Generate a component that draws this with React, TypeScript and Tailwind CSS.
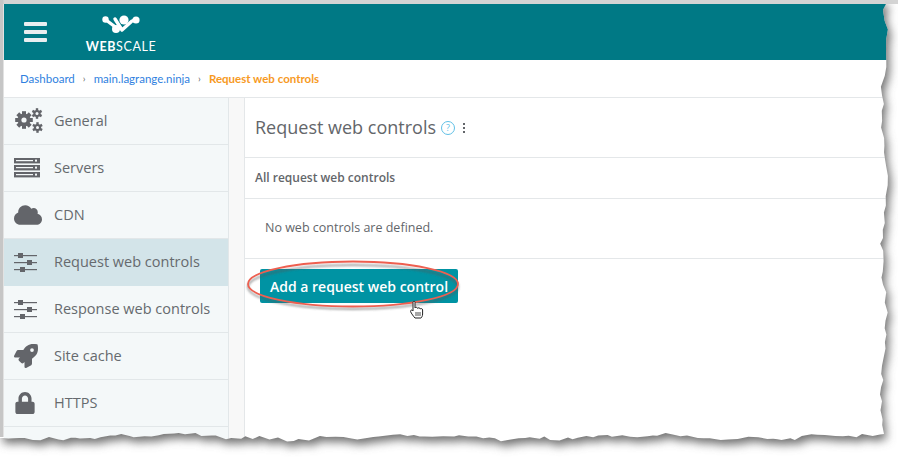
import React from "react";
import { FaCloud, FaRocket, FaLock } from "react-icons/fa";

function seeded(seed: number) {
  let s = seed;
  return () => {
    s = (s * 16807) % 2147483647;
    return (s - 1) / 2147483646;
  };
}

function tornPath() {
  const r = seeded(4242);
  const pts: string[] = ["0,0", "884,0", "886,4", "885,6"];
  // right edge: top to bottom
  for (let y = 10; y < 428; y += 5 + r() * 6) {
    const x = 882 + r() * 4 + Math.sin(y / 23) * 2;
    pts.push(`${x.toFixed(1)},${y.toFixed(1)}`);
  }
  pts.push("884,434");
  // bottom edge: right to left
  for (let x = 880; x > 4; x -= 4 + r() * 7) {
    const y = 439 - r() * 4 + Math.sin(x / 37) * 2 + Math.sin(x / 11);
    pts.push(`${x.toFixed(1)},${y.toFixed(1)}`);
  }
  pts.push("3,438", "0,438");
  return "M" + pts.join(" L") + " Z";
}

const torn = tornPath();

function Gears() {
  return (
    <svg width="29" height="26" viewBox="0 0 29 26" fill="#63656a">
      <g>
        <circle cx="10" cy="12" r="6.5" />
        {[0, 45, 90, 135].map((a) => (
          <rect key={a} x="8" y="3.2" width="4" height="17.6" transform={`rotate(${a} 10 12)`} />
        ))}
        <circle cx="10" cy="12" r="2.6" fill="#f4f8f9" />
      </g>
      {[
        [23, 5.5],
        [23.5, 19.5],
      ].map(([cx, cy]) => (
        <g key={cy}>
          <circle cx={cx} cy={cy} r="3.6" />
          {[0, 60, 120].map((a) => (
            <rect key={a} x={cx - 1.2} y={cy - 5.3} width="2.4" height="10.6" transform={`rotate(${a} ${cx} ${cy})`} />
          ))}
          <circle cx={cx} cy={cy} r="1.5" fill="#f4f8f9" />
        </g>
      ))}
    </svg>
  );
}

function ServersIcon() {
  return (
    <svg width="26" height="20" viewBox="0 0 26 20" fill="#63656a">
      {[0, 7, 14].map((y) => (
        <g key={y}>
          <rect x="0" y={y} width="26" height="5.4" />
          <rect x="2" y={y + 2} width="17" height="1.2" fill="#f4f8f9" />
          <rect x="21" y={y + 1.6} width="2" height="2" fill="#f4f8f9" />
        </g>
      ))}
    </svg>
  );
}

function Sliders() {
  return (
    <svg width="23" height="20" viewBox="0 0 23 20" fill="#63656a">
      <rect x="0" y="3" width="23" height="1.2" />
      <rect x="4" y="1" width="5" height="5" />
      <rect x="0" y="10" width="23" height="1.2" />
      <rect x="13" y="8" width="5" height="5" />
      <rect x="0" y="17" width="23" height="1.2" />
      <rect x="6" y="15" width="5" height="5" />
    </svg>
  );
}

function Logo() {
  return (
    <div className="flex flex-col items-center ml-[36px] mt-[11px] w-[76px]">
      <svg width="40" height="21" viewBox="0 0 40 21">
        <g stroke="#ffffff" fill="none" strokeWidth="3.4" strokeLinecap="round" strokeLinejoin="round">
          <path d="M5 5 L17 14" />
          <path d="M14 4 L21 15 L31 6 L34 5" />
        </g>
        <g fill="#ffffff">
          <circle cx="4.5" cy="4.5" r="3.2" />
          <circle cx="15" cy="14" r="4" />
          <circle cx="23" cy="5" r="4.6" />
          <circle cx="35" cy="5" r="3.6" />
        </g>
      </svg>
      <div className="mt-[4px] text-[12.5px] leading-[13px] tracking-[0.6px] text-white font-['Lato','sans-serif']">
        <span className="font-bold">WEB</span>
        <span className="font-normal">SCALE</span>
      </div>
    </div>
  );
}

const items: [string, React.ReactNode, boolean][] = [
  ["General", <Gears />, false],
  ["Servers", <ServersIcon />, false],
  ["CDN", <FaCloud size={28} color="#63656a" />, false],
  ["Request web controls", <Sliders />, true],
  ["Response web controls", <Sliders />, false],
  ["Site cache", <FaRocket size={24} color="#63656a" />, false],
  ["HTTPS", <FaLock size={22} color="#63656a" />, false],
  ["", null, false],
];

export default function App() {
  return (
    <div className="relative h-[459px] w-[898px] overflow-hidden bg-white font-['Open_Sans','sans-serif']">
      <div className="flex h-full w-full flex-col pl-[4px] pt-[4px]">
        <header className="flex h-[56px] shrink-0 bg-[#007985]">
          <div className="ml-[20px] mt-[18px] flex h-[20px] w-[23px] flex-col justify-between">
            <span className="h-[4px] rounded-[1px] bg-[#e9eef0]" />
            <span className="h-[4px] rounded-[1px] bg-[#e9eef0]" />
            <span className="h-[4px] rounded-[1px] bg-[#e9eef0]" />
          </div>
          <Logo />
        </header>
        <nav className="flex h-[37px] shrink-0 items-center gap-[8px] pl-[16px] font-['Lato','sans-serif'] text-[11.5px] text-[#2f7fe0]">
          <span>Dashboard</span>
          <span className="text-[#666] text-[10px]">›</span>
          <span>main.lagrange.ninja</span>
          <span className="text-[#666] text-[10px]">›</span>
          <span className="font-bold text-[#f79a1f]">Request web controls</span>
        </nav>
        <div className="flex min-h-0 flex-1 border-t border-[#e4e7e9]">
          <aside className="w-[225px] shrink-0 border-r border-[#e2e7e9] bg-[#f4f8f9]">
            {items.map(([label, icon, active], i) => (
              <div
                key={i}
                className={
                  active
                    ? "flex h-[47px] items-center border-b border-[#d3e4e9] bg-[#d3e4e9]"
                    : "flex h-[47px] items-center border-b border-[#e2e7e9]"
                }
              >
                <span className="flex w-[50px] shrink-0 items-center pl-[10px]">{icon}</span>
                <span className="whitespace-nowrap text-[14.5px] text-[#666a6e]">{label}</span>
              </div>
            ))}
          </aside>
          <div className="w-[15px] shrink-0 bg-[#f8f8f8]" />
          <main className="min-w-0 flex-1 border-l border-[#e4e7e9] bg-white">
            <div className="flex h-[60px] items-center border-b border-[#e4e7e9] pl-[10px]">
              <span className="text-[18px] text-[#63666a]">Request web controls</span>
              <span className="ml-[5px] flex h-[14px] w-[14px] items-center justify-center rounded-full border border-[#5fc0e6] text-[9px] text-[#5fc0e6]">?</span>
              <span className="ml-[8px] flex flex-col gap-[2px]">
                <span className="h-[2px] w-[2px] bg-[#63666a]" />
                <span className="h-[2px] w-[2px] bg-[#63666a]" />
                <span className="h-[2px] w-[2px] bg-[#63666a]" />
              </span>
            </div>
            <div className="flex h-[41px] items-center border-b border-[#e4e7e9] pl-[10px] text-[12px] font-semibold text-[#63666a]">
              All request web controls
            </div>
            <div className="flex h-[60px] items-center border-b border-[#e4e7e9] pl-[20px] text-[12.5px] text-[#63666a]">
              No web controls are defined.
            </div>
            <div className="pl-[15px] pt-[10px]">
              <button className="h-[34px] w-[198px] rounded-[2px] bg-[#0093a3] text-[14px] font-semibold text-white">
                Add a request web control
              </button>
            </div>
          </main>
        </div>
      </div>

      <svg className="absolute left-0 top-0" width="898" height="459" viewBox="0 0 898 459">
        <defs>
          <clipPath id="outside">
            <path d={`M0 0H898V459H0Z ${torn}`} clipRule="evenodd" />
          </clipPath>
          <filter id="blur6" x="-5%" y="-5%" width="110%" height="110%">
            <feGaussianBlur stdDeviation="5" />
          </filter>
          <filter id="sh" x="-20%" y="-50%" width="140%" height="200%">
            <feGaussianBlur stdDeviation="1.2" />
          </filter>
        </defs>
        <g clipPath="url(#outside)">
          <rect width="898" height="459" fill="#ffffff" />
          <path d={torn} transform="translate(3 5)" fill="#6f6f6f" filter="url(#blur6)" />
        </g>
        <rect x="0" y="0" width="898" height="4" fill="#cdcdcd" opacity="0.85" />
        <rect x="0" y="0" width="3.5" height="437" fill="#c6c6c6" />
        <ellipse cx="353" cy="285" rx="105" ry="22" fill="none" stroke="#555" strokeOpacity="0.55" strokeWidth="2" transform="translate(0 2)" filter="url(#sh)" />
        <ellipse cx="353" cy="284" rx="105" ry="22.5" fill="none" stroke="#ee5f50" strokeWidth="1.8" />
        <g transform="translate(410 301)">
          <path
            d="M3 1.2 C3 0 5 0 5 1.2 V7 C5.5 6 7.4 6 7.6 7.4 C8.2 6.4 10 6.6 10.2 8 C10.8 7.2 12.6 7.4 12.6 9 V13 C12.6 15 11.4 17 11 17 H5 C4 16 1 12 0.6 10.6 C0.2 9 2 8.4 3 10 Z"
            fill="#ffffff"
            stroke="#222"
            strokeWidth="1"
          />
          <path d="M6 11v4M8 11v4M10 11v4" stroke="#222" strokeWidth="0.8" />
        </g>
      </svg>
    </div>
  );
}
